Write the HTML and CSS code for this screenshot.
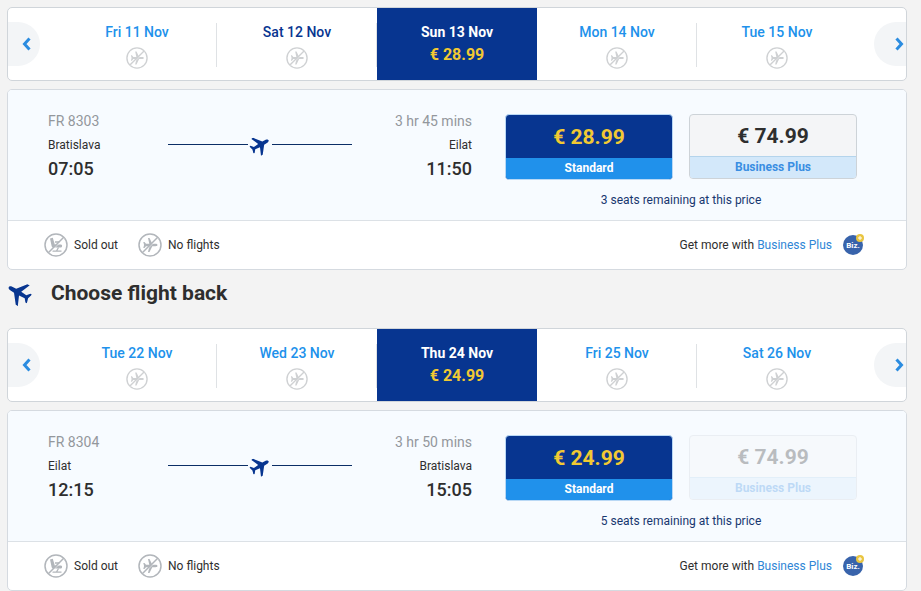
FILE: index.html
```
<!DOCTYPE html>
<html lang="en">
<head>
  <meta charset="UTF-8">
  <meta name="viewport" content="width=device-width, initial-scale=1.0">
  <title>Select flights</title>
  <link rel="stylesheet" href="styles.css">
</head>
<body>
  <svg class="sprite" aria-hidden="true">
    <symbol id="plane" viewBox="0 0 24 24">
      <path d="M24 17.500l-.3-2.500-9.500-7.500-.2-4.500C13.800 1.300 13 0 12 0s-1.800 1.300-2 3l-.2 4.500L.3 15 0 17.500l9.800-4.200.6 6.200L7 22.300V24l5-1.500 5 1.500v-1.700l-3.400-2.800.6-6.200z"/>
    </symbol>
    <symbol id="no-flights" viewBox="0 0 24 24">
      <circle cx="12" cy="12" r="11" fill="none" stroke="currentColor" stroke-width="1.500"/>
      <path fill="currentColor" d="M19.500 12c0-.8-1-1.200-2-1.200h-3.200L11.500 5H10l1.300 5.800H8L6.500 9H5.300l.8 3-.8 3h1.200L8 13.200h3.300L10 19h1.500l2.800-5.800h3.200c1 0 2-.4 2-1.200z"/>
      <path stroke="#fff" stroke-width=".7" d="M5.200 20.200l15-15"/>
      <path stroke="currentColor" stroke-width="1.500" d="M4.300 19.700L19.700 4.300"/>
    </symbol>
    <symbol id="sold-out" viewBox="0 0 24 24">
      <circle cx="12" cy="12" r="11" fill="none" stroke="currentColor" stroke-width="1.500"/>
      <path fill="currentColor" d="M6 5.500l2.800-.8 2 6.800H17c1.500 0 1.500 3 0 3H9.500c-1 0-1.600-.5-1.900-1.500z"/>
      <path fill="none" stroke="currentColor" stroke-width="1.300" d="M11 9h4.500M8.500 18.200h9M14.500 14.500l-2 3.500"/>
      <path stroke="#fff" stroke-width=".7" d="M5.200 20.200l15-15"/>
      <path stroke="currentColor" stroke-width="1.500" d="M4.300 19.700L19.700 4.300"/>
    </symbol>
    <symbol id="chevron" viewBox="0 0 9 14">
      <path fill="none" stroke="currentColor" stroke-width="3" d="M7.500 1.500L2.500 7l5 5.500"/>
    </symbol>
  </svg>

  <main>
    <section class="flight">
      <div class="dates">
        <button class="arrow prev" aria-label="Earlier dates"><svg><use href="#chevron"/></svg></button>
        <button class="day">Fri 11 Nov <svg class="none"><use href="#no-flights"/></svg></button>
        <button class="day original">Sat 12 Nov <svg class="none"><use href="#no-flights"/></svg></button>
        <button class="day selected">Sun 13 Nov <span class="day-price">€ 28.99</span></button>
        <button class="day">Mon 14 Nov <svg class="none"><use href="#no-flights"/></svg></button>
        <button class="day">Tue 15 Nov <svg class="none"><use href="#no-flights"/></svg></button>
        <button class="arrow next" aria-label="Later dates"><svg><use href="#chevron"/></svg></button>
      </div>

      <div class="card">
        <div class="card-body">
          <div class="route">
            <div class="stop">
              <span class="meta">FR 8303</span>
              <span class="city">Bratislava</span>
              <span class="time">07:05</span>
            </div>
            <div class="path"><svg><use href="#plane"/></svg></div>
            <div class="stop arrival">
              <span class="meta">3 hr 45 mins</span>
              <span class="city">Eilat</span>
              <span class="time">11:50</span>
            </div>
          </div>
          <div class="fares">
            <div class="fare-row">
              <button class="fare standard">
                <span class="fare-price">€ 28.99</span>
                <span class="fare-name">Standard</span>
              </button>
              <button class="fare">
                <span class="fare-price">€ 74.99</span>
                <span class="fare-name">Business Plus</span>
              </button>
            </div>
            <p class="seats">3 seats remaining at this price</p>
          </div>
        </div>
        <div class="card-footer">
          <span class="legend"><svg><use href="#sold-out"/></svg>Sold out</span>
          <span class="legend"><svg><use href="#no-flights"/></svg>No flights</span>
          <span class="more">Get more with <a href="#">Business Plus</a></span>
          <svg class="biz" viewBox="0 1 22 22">
            <circle cx="10" cy="12" r="10" fill="#3863ab"/>
            <text x="10" y="15" text-anchor="middle">Biz.</text>
            <circle cx="17" cy="5" r="4" fill="#e9c540"/>
            <path stroke="#fff" d="M17 3v4M15 5h4"/>
          </svg>
        </div>
      </div>
    </section>

    <h2><svg><use href="#plane"/></svg>Choose flight back</h2>

    <section class="flight">
      <div class="dates">
        <button class="arrow prev" aria-label="Earlier dates"><svg><use href="#chevron"/></svg></button>
        <button class="day">Tue 22 Nov <svg class="none"><use href="#no-flights"/></svg></button>
        <button class="day">Wed 23 Nov <svg class="none"><use href="#no-flights"/></svg></button>
        <button class="day selected">Thu 24 Nov <span class="day-price">€ 24.99</span></button>
        <button class="day">Fri 25 Nov <svg class="none"><use href="#no-flights"/></svg></button>
        <button class="day">Sat 26 Nov <svg class="none"><use href="#no-flights"/></svg></button>
        <button class="arrow next" aria-label="Later dates"><svg><use href="#chevron"/></svg></button>
      </div>

      <div class="card">
        <div class="card-body">
          <div class="route">
            <div class="stop">
              <span class="meta">FR 8304</span>
              <span class="city">Eilat</span>
              <span class="time">12:15</span>
            </div>
            <div class="path"><svg><use href="#plane"/></svg></div>
            <div class="stop arrival">
              <span class="meta">3 hr 50 mins</span>
              <span class="city">Bratislava</span>
              <span class="time">15:05</span>
            </div>
          </div>
          <div class="fares">
            <div class="fare-row">
              <button class="fare standard">
                <span class="fare-price">€ 24.99</span>
                <span class="fare-name">Standard</span>
              </button>
              <button class="fare" disabled>
                <span class="fare-price">€ 74.99</span>
                <span class="fare-name">Business Plus</span>
              </button>
            </div>
            <p class="seats">5 seats remaining at this price</p>
          </div>
        </div>
        <div class="card-footer">
          <span class="legend"><svg><use href="#sold-out"/></svg>Sold out</span>
          <span class="legend"><svg><use href="#no-flights"/></svg>No flights</span>
          <span class="more">Get more with <a href="#">Business Plus</a></span>
          <svg class="biz" viewBox="0 1 22 22">
            <circle cx="10" cy="12" r="10" fill="#3863ab"/>
            <text x="10" y="15" text-anchor="middle">Biz.</text>
            <circle cx="17" cy="5" r="4" fill="#e9c540"/>
            <path stroke="#fff" d="M17 3v4M15 5h4"/>
          </svg>
        </div>
      </div>
    </section>
  </main>
</body>
</html>
```
FILE: styles.css
```
* {
  box-sizing: border-box;
}

body {
  margin: 0;
  background: #f3f3f3;
  color: #2e2e2e;
  font-family: Roboto, "Liberation Sans", sans-serif;
  font-size: 12px;
}

button {
  font-family: inherit;
  padding: 0;
  border: none;
  background: none;
  cursor: pointer;
}

svg {
  display: block;
  flex-shrink: 0;
}

.sprite {
  position: absolute;
  width: 0;
  height: 0;
}

main {
  padding: 7px 14px 0 7px;
}

/* date strip */
.dates {
  display: grid;
  grid-template-columns: 49px repeat(5, 1fr) 49px;
  align-items: center;
  height: 74px;
  margin-bottom: 8px;
  background: #fff;
  border: 1px solid #d0d5da;
  border-radius: 5px;
  overflow: hidden;
}

.arrow {
  display: flex;
  align-items: center;
  justify-content: flex-end;
  width: 32px;
  height: 44px;
  background: #f3f5f7;
  color: #2b8ce0;
}

.arrow svg {
  width: 9px;
  height: 14px;
}

.prev {
  padding-right: 9px;
  border-radius: 0 22px 22px 0;
}

.next {
  justify-self: end;
  padding-right: 2px;
  border-radius: 22px 0 0 22px;
}

.next svg {
  transform: rotate(180deg);
}

.day {
  position: relative;
  display: flex;
  flex-direction: column;
  align-items: center;
  gap: 7px;
  height: 72px;
  padding-top: 16px;
  color: #2091eb;
  font-size: 14px;
  font-weight: 500;
  line-height: 16px;
}

.day::after {
  content: "";
  position: absolute;
  right: 0;
  top: 15px;
  width: 1px;
  height: 44px;
  background: #dfe2e5;
}

.day:nth-child(6)::after,
.day.selected::after {
  display: none;
}

.day.original {
  color: #073590;
}

.day.selected {
  background: #073590;
  color: #fff;
  font-weight: 700;
}

.day-price {
  color: #f1c933;
  font-size: 16px;
}

.none {
  width: 22px;
  height: 22px;
  color: #cfd1d3;
}

/* flight card */
.card {
  border: 1px solid #d5dae0;
  border-radius: 5px;
  background: #fff;
  overflow: hidden;
}

.card-body {
  display: flex;
  gap: 33px;
  min-height: 131px;
  padding: 0 49px 0 40px;
  background: #f7fbff;
  border-bottom: 1px solid #dce1e6;
}

.route {
  display: flex;
  flex: 1;
  padding-top: 23px;
}

.stop {
  display: flex;
  flex-direction: column;
  width: 120px;
}

.arrival {
  text-align: right;
}

.meta {
  color: #93979c;
  font-size: 14px;
  line-height: 16px;
}

.city {
  margin: 8px 0;
  line-height: 16px;
}

.time {
  font-size: 18px;
  font-weight: 500;
  line-height: 16px;
}

.path {
  display: flex;
  flex: 1;
  align-items: center;
  gap: 2px;
  height: 63px;
}

.path::before,
.path::after {
  content: "";
  flex: 1;
  height: 1px;
  background: #0b2e66;
}

.path svg,
h2 svg {
  fill: #073590;
}

.path svg {
  width: 20px;
  height: 20px;
  transform: rotate(60deg);
}

.fares {
  padding-top: 24px;
}

.fare-row {
  display: flex;
  align-items: flex-start;
  gap: 16px;
}

.fare {
  display: flex;
  flex-direction: column;
  width: 168px;
  border: 1px solid #cdd3d8;
  border-radius: 4px;
  background: #f4f5f7;
  color: #2e2e2e;
  overflow: hidden;
}

.fare-price,
.fare-name {
  width: 100%;
  text-align: center;
}

.fare-price {
  padding-top: 2px;
  font-size: 21px;
  font-weight: 700;
  line-height: 39px;
}

.fare-name {
  border-top: 1px solid #b4d4ec;
  background: #d3e8fa;
  color: #3a8ee2;
  font-size: 12px;
  font-weight: 700;
  line-height: 21px;
}

.fare.standard {
  border-color: #b9d8f5;
  background: #073590;
  color: #f1c933;
}

.standard .fare-price {
  line-height: 41px;
}

.standard .fare-name {
  border-top: none;
  background: #2091eb;
  color: #fff;
}

.fare:disabled {
  opacity: 0.3;
}

.seats {
  margin: 12px 0 0;
  color: #17376f;
  line-height: 16px;
  text-align: center;
}

.card-footer {
  display: flex;
  align-items: center;
  height: 48px;
  padding: 0 41px 0 36px;
}

.legend {
  display: flex;
  align-items: center;
  gap: 6px;
  margin-right: 20px;
}

.legend svg {
  width: 24px;
  height: 24px;
  color: #b2b6bb;
}

.more {
  margin-left: auto;
}

.more a {
  color: #2f86d6;
  text-decoration: none;
}

.biz {
  width: 22px;
  height: 22px;
  margin-left: 11px;
}

.biz text {
  fill: #fff;
  font-size: 8px;
  font-weight: 700;
}

h2 {
  display: flex;
  align-items: center;
  gap: 20px;
  height: 46px;
  margin: 0 0 12px;
  font-size: 21px;
  font-weight: 700;
}

h2 svg {
  width: 24px;
  height: 24px;
  transform: rotate(-60deg);
}
```
